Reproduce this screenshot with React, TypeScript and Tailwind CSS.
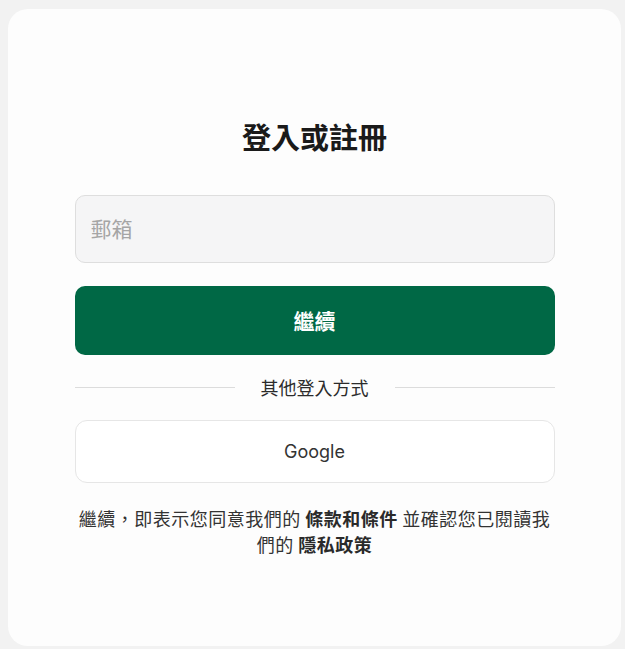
export default function App() {
  return (
    <div className="min-h-screen w-full bg-[#f2f2f2] pt-[9px] pl-[8px] pr-[4px] pb-[3px] font-['Noto_Sans_CJK_TC','Noto_Sans',sans-serif]">
      <div className="w-[613px] h-[637px] bg-[#fdfdfd] rounded-[20px] flex flex-col items-center pt-[107px]">
        <div className="w-[480px] flex flex-col">
          <h1 className="text-center text-[29px] leading-[40px] font-bold text-[#1a1a1a]">
            登入或註冊
          </h1>
          <div className="mt-[39px] h-[68px] rounded-[10px] border border-[#dedede] bg-[#f5f5f6] flex items-center px-[15px]">
            <input
              type="text"
              placeholder="郵箱"
              className="w-full bg-transparent outline-none text-[21px] text-[#333] placeholder:text-[#a5a5a5]"
            />
          </div>
          <button className="mt-[23px] h-[69px] rounded-[10px] bg-[#006845] text-white text-[21px] font-bold">
            繼續
          </button>
          <div className="mt-[21px] flex items-center gap-[26px]">
            <div className="flex-1 h-px bg-[#dcdcdc]" />
            <span className="text-[18px] leading-[22px] text-[#2b2b2b]">其他登入方式</span>
            <div className="flex-1 h-px bg-[#dcdcdc]" />
          </div>
          <button className="mt-[22px] h-[63px] rounded-[12px] border border-[#e6e6e6] bg-white text-[18px] text-[#333] font-['Inter',sans-serif]">
            Google
          </button>
          <p className="mt-[22px] text-center text-[18px] leading-[26px] tracking-[0.5px] text-[#333]">
            繼續，即表示您同意我們的 <span className="font-bold text-[#2a2a2a]">條款和條件</span> 並確認您已閱讀我們的 <span className="font-bold text-[#2a2a2a]">隱私政策</span>
          </p>
        </div>
      </div>
    </div>
  );
}
